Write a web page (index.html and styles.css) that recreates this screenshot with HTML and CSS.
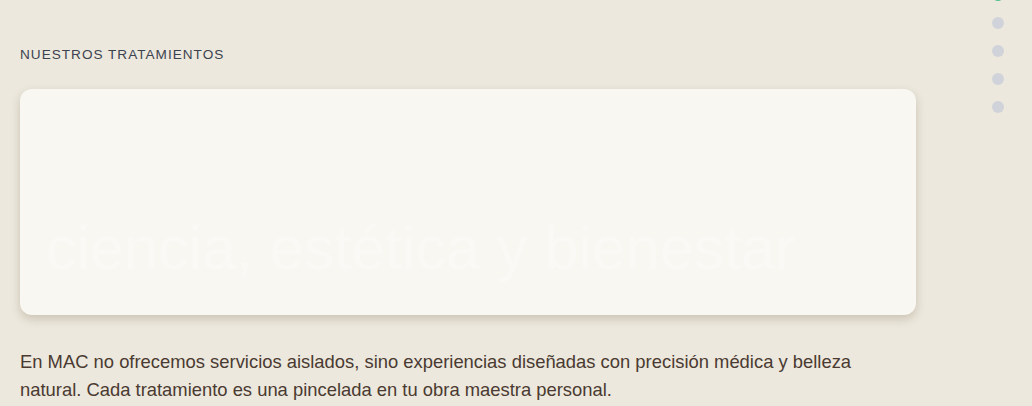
FILE: index.html
```html
<!DOCTYPE html>
<html lang="es">
<head>
<meta charset="utf-8">
<link rel="stylesheet" href="styles.css">
</head>
<body>
<main class="section">
  <h2 class="eyebrow">NUESTROS TRATAMIENTOS</h2>
  <div class="card">
    <p class="card-title">ciencia, estética y bienestar</p>
  </div>
  <p class="lead">En MAC no ofrecemos servicios aislados, sino experiencias diseñadas con precisión médica y belleza natural. Cada tratamiento es una pincelada en tu obra maestra personal.</p>
</main>
<nav class="dots">
  <span class="dot active"></span>
  <span class="dot"></span>
  <span class="dot"></span>
  <span class="dot"></span>
  <span class="dot"></span>
</nav>
</body>
</html>
```
FILE: styles.css
```css
html, body {
  margin: 0;
  padding: 0;
}
body {
  width: 1032px;
  height: 406px;
  overflow: hidden;
  background: #ece8dd;
  font-family: "Liberation Sans", Arial, sans-serif;
  position: relative;
}
.section {
  padding: 47px 0 0 20px;
  width: 896px;
}
.eyebrow {
  margin: 0;
  font-size: 13.6px;
  font-weight: 400;
  letter-spacing: 1px;
  color: #3c4350;
  line-height: 16px;
}
.card {
  margin-top: 26px;
  height: 226px;
  background: #f8f7f2;
  border-radius: 12px;
  box-shadow: 0 4px 10px rgba(90, 70, 40, 0.22);
  display: flex;
  align-items: flex-end;
  padding: 0 26px;
  box-sizing: border-box;
}
.card-title {
  margin: 0 0 37px;
  font-size: 61px;
  line-height: 60px;
  color: #faf9f6;
  white-space: nowrap;
}
.lead {
  margin: 33px 0 0;
  max-width: 880px;
  font-size: 18.4px;
  line-height: 28px;
  color: #4a3a31;
}
.dots {
  position: absolute;
  top: -11px;
  left: 992px;
  display: flex;
  flex-direction: column;
  gap: 16px;
}
.dot {
  width: 12px;
  height: 12px;
  border-radius: 50%;
  background: #d1d3da;
}
.dot.active {
  background: #4fbf93;
}
```
